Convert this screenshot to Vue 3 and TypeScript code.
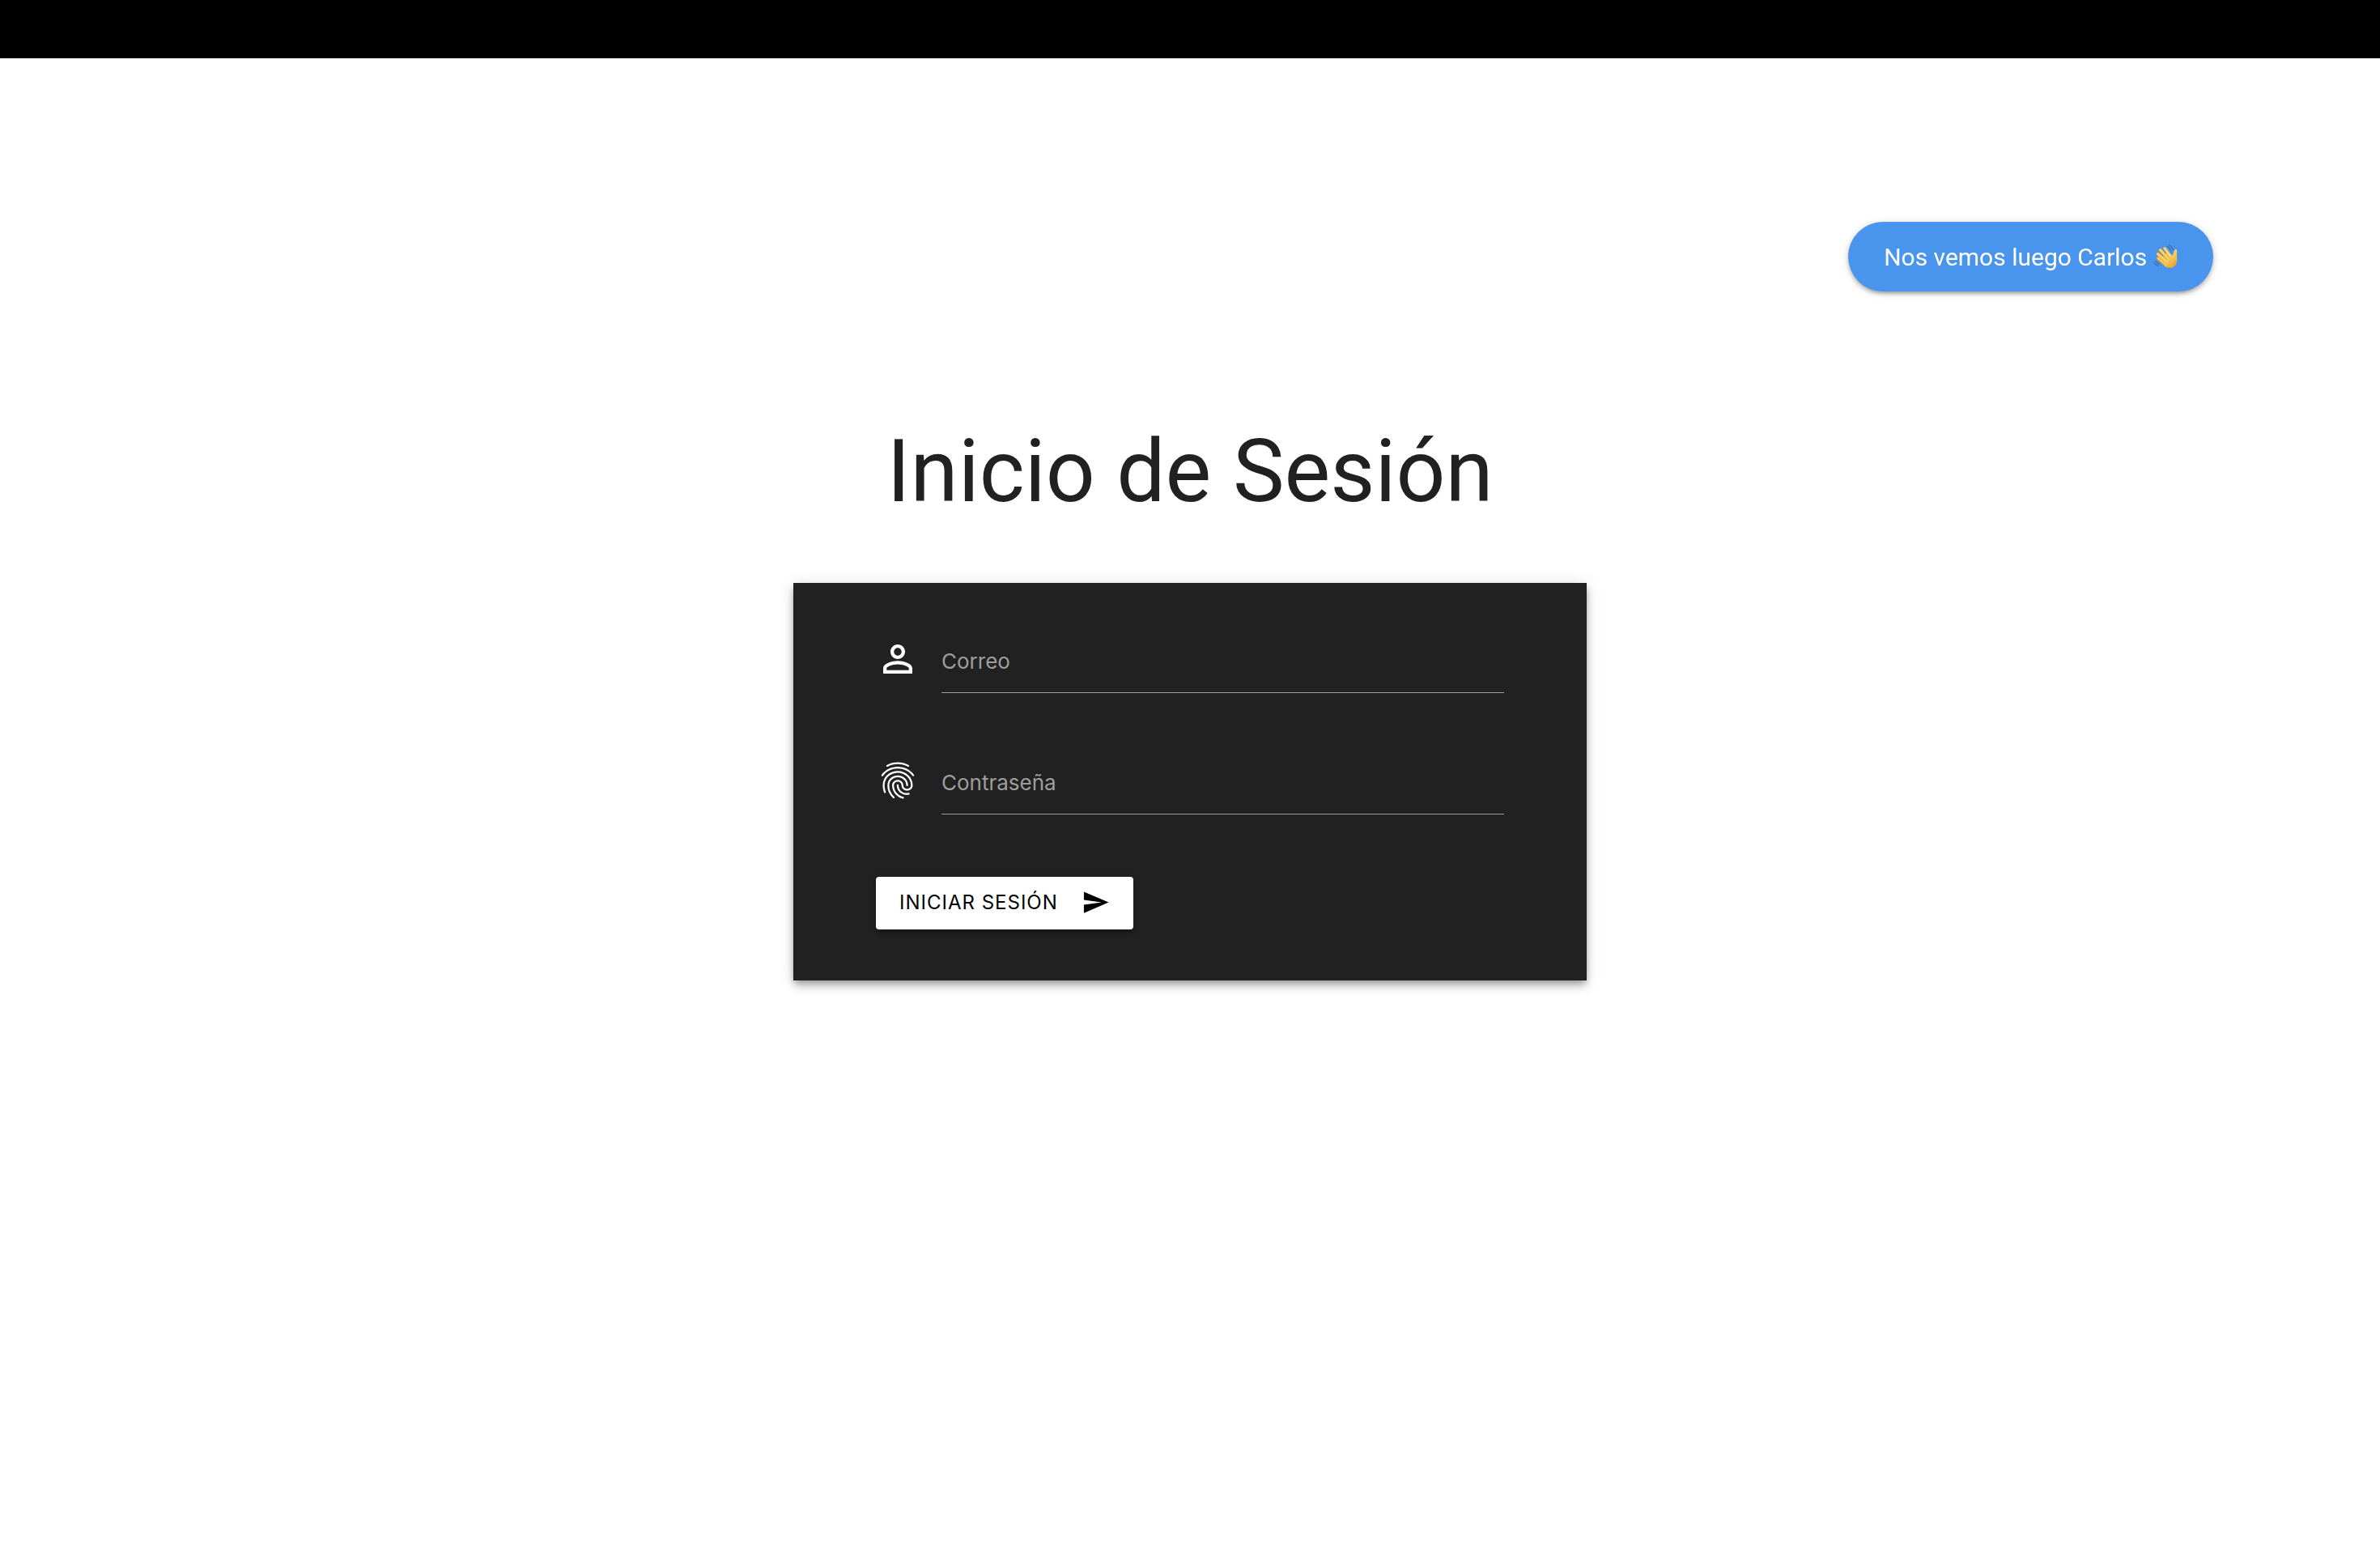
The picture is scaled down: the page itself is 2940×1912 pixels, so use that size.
<script setup lang="ts">
import { ref } from 'vue'

const email = ref('')
const password = ref('')
</script>

<template>
  <div class="page">
    <header class="navbar"></header>

    <main class="content">
      <h1 class="title">Inicio de Sesión</h1>

      <form class="card" @submit.prevent>
        <div class="field">
          <svg class="field-icon" viewBox="0 0 24 24" aria-hidden="true">
            <path d="M12 5.9c1.16 0 2.1.94 2.1 2.1s-.94 2.1-2.1 2.1S9.9 9.16 9.9 8s.94-2.1 2.1-2.1m0 9c2.97 0 6.1 1.46 6.1 2.1v1.1H5.9V17c0-.64 3.13-2.1 6.1-2.1M12 4C9.79 4 8 5.79 8 8s1.79 4 4 4 4-1.79 4-4-1.79-4-4-4zm0 9c-2.67 0-8 1.34-8 4v3h16v-3c0-2.66-5.33-4-8-4z" />
          </svg>
          <div class="control">
            <label for="email" :class="{ hidden: email }">Correo</label>
            <input id="email" v-model="email" type="email" />
          </div>
        </div>

        <div class="field">
          <svg class="field-icon" viewBox="0 0 24 24" aria-hidden="true">
            <path d="M17.81 4.47c-.08 0-.16-.02-.23-.06C15.66 3.42 14 3 12.01 3c-1.98 0-3.86.47-5.57 1.41-.24.13-.54.04-.68-.2-.13-.24-.04-.55.2-.68C7.82 2.52 9.86 2 12.01 2c2.13 0 3.99.47 6.03 1.52.25.13.34.43.21.67-.09.18-.26.28-.44.28zM3.5 9.72c-.1 0-.2-.03-.29-.09-.23-.16-.28-.47-.12-.7.99-1.4 2.25-2.5 3.75-3.27C9.98 4.04 14 4.03 17.15 5.65c1.5.77 2.76 1.86 3.75 3.25.16.22.11.54-.12.7-.23.16-.54.11-.7-.12-.9-1.26-2.04-2.25-3.39-2.94-2.87-1.47-6.54-1.47-9.4.01-1.36.7-2.5 1.7-3.4 2.96-.08.14-.23.21-.39.21zm6.25 12.07c-.13 0-.26-.05-.35-.15-.87-.87-1.34-1.43-2.01-2.64-.69-1.23-1.05-2.73-1.05-4.34 0-2.97 2.54-5.39 5.66-5.39s5.66 2.42 5.66 5.39c0 .28-.22.5-.5.5s-.5-.22-.5-.5c0-2.42-2.09-4.39-4.66-4.39-2.57 0-4.66 1.97-4.66 4.39 0 1.44.32 2.77.93 3.85.64 1.15 1.08 1.64 1.85 2.42.19.2.19.51 0 .71-.11.1-.24.15-.37.15zm7.17-1.85c-1.19 0-2.24-.3-3.1-.89-1.49-1.01-2.38-2.65-2.38-4.39 0-.28.22-.5.5-.5s.5.22.5.5c0 1.41.72 2.74 1.94 3.56.71.48 1.54.71 2.54.71.24 0 .64-.03 1.04-.1.27-.05.53.13.58.41.05.27-.13.53-.41.58-.57.11-1.07.12-1.21.12zM14.91 22c-.04 0-.09-.01-.13-.02-1.59-.44-2.63-1.03-3.72-2.1-1.4-1.39-2.17-3.24-2.17-5.22 0-1.62 1.38-2.94 3.08-2.94 1.7 0 3.08 1.32 3.08 2.94 0 1.07.93 1.94 2.08 1.94s2.08-.87 2.08-1.94c0-3.77-3.25-6.83-7.25-6.83-2.84 0-5.44 1.58-6.61 4.03-.39.81-.59 1.76-.59 2.8 0 .78.07 2.01.67 3.61.1.26-.03.55-.29.64-.26.1-.55-.04-.64-.29-.49-1.31-.73-2.61-.73-3.96 0-1.2.23-2.29.68-3.24 1.33-2.79 4.28-4.6 7.51-4.6 4.55 0 8.25 3.51 8.25 7.83 0 1.62-1.38 2.94-3.08 2.94s-3.08-1.32-3.08-2.94c0-1.07-.93-1.94-2.08-1.94s-2.08.87-2.08 1.94c0 1.71.66 3.31 1.87 4.51.95.94 1.86 1.46 3.27 1.85.27.07.42.35.35.61-.05.23-.26.38-.47.38z" />
          </svg>
          <div class="control">
            <label for="password" :class="{ hidden: password }">Contraseña</label>
            <input id="password" v-model="password" type="password" />
          </div>
        </div>

        <button class="submit" type="submit">
          Iniciar Sesión
          <svg class="submit-icon" viewBox="0 0 24 24" aria-hidden="true">
            <path d="M2.01 21L23 12 2.01 3 2 10l15 2-15 2z" />
          </svg>
        </button>
      </form>
    </main>

    <div class="toast" role="status">
      <span>Nos vemos luego Carlos</span>
      <svg class="wave" viewBox="0 0 90 90" role="img" aria-label="Saludo">
        <defs>
          <linearGradient id="palm" x1="0" y1="0" x2="0.7" y2="1">
            <stop offset="0" stop-color="#fbd36a" />
            <stop offset="0.6" stop-color="#f8cb58" />
            <stop offset="1" stop-color="#e5a136" />
          </linearGradient>
        </defs>
        <g fill="none" stroke="#3f5878" stroke-width="3" stroke-linecap="round">
          <path d="M53 7Q62 12 65 22" />
          <path d="M58 1Q69 7 74 19" />
          <path d="M9 61Q13 70 22 73" />
          <path d="M2 66Q7 77 18 80" />
        </g>
        <path
          d="M42 32L62 34C67 41 72 42 74 34L78 22C80 15 89 18 88 25C86 34 88 43 88 54C88 74 78 87 62 87C50 87 43 82 34 73L28 62Z"
          fill="url(#palm)"
        />
        <g fill="none" stroke-linecap="round">
          <g stroke="#c48528" stroke-width="13">
            <path d="M18 51L40 70" />
            <path d="M17 35L46 61" />
            <path d="M26 20L54 52" />
          </g>
          <path d="M42 14L63 43" stroke="#fbd36a" stroke-width="10" />
          <path d="M26 20L56 54" stroke="#fbd36a" stroke-width="10" />
          <path d="M17 35L50 64" stroke="#fbd36a" stroke-width="10" />
          <path d="M18 51L46 74" stroke="#f6c653" stroke-width="10" />
        </g>
        <path d="M68 48Q58 56 62 68" fill="none" stroke="#e9b548" stroke-width="2" />
      </svg>
    </div>
  </div>
</template>

<style>
body {
  margin: 0;
  background: #fff;
}
</style>

<style scoped>
.page {
  min-height: 100vh;
  font-family: Inter, 'Liberation Sans', sans-serif;
  color: #212121;
}

.navbar {
  height: 72px;
  background: #000;
}

.content {
  display: flex;
  flex-direction: column;
  align-items: center;
  padding-top: 444px;
}

.title {
  margin: 0 0 70px;
  font-family: Roboto, 'Liberation Sans', sans-serif;
  font-size: 107px;
  line-height: 134px;
  font-weight: 400;
  white-space: nowrap;
}

.card {
  box-sizing: border-box;
  width: calc(100% / 3);
  min-width: 600px;
  padding: 50px 102px 63px;
  background: #212121;
  box-shadow:
    0 8px 10px 0 rgba(0, 0, 0, 0.14),
    0 2px 20px 0 rgba(0, 0, 0, 0.12),
    0 4px 8px -2px rgba(0, 0, 0, 0.3);
}

.field {
  display: flex;
  align-items: center;
  gap: 27px;
  box-sizing: border-box;
  height: 86px;
  padding-top: 2px;
}

.field + .field {
  margin-top: 64px;
}

.field-icon {
  flex: none;
  width: 54px;
  height: 54px;
  fill: #fff;
}

.control {
  display: grid;
  flex: 1;
  height: 100%;
}

.control label,
.control input {
  grid-area: 1 / 1;
}

.control label {
  align-self: center;
  padding-top: 6px;
  font-size: 26px;
  line-height: 32px;
  color: #9e9e9e;
  pointer-events: none;
}

.control label.hidden {
  visibility: hidden;
}

.control input {
  box-sizing: border-box;
  width: 100%;
  min-width: 0;
  height: 100%;
  padding: 0;
  border: 0;
  border-bottom: 1px solid #9e9e9e;
  border-radius: 0;
  outline: none;
  background: transparent;
  color: #fff;
  font: inherit;
  font-size: 26px;
}

.submit {
  display: flex;
  align-items: center;
  gap: 29px;
  height: 65px;
  margin-top: 77px;
  padding: 0 29px 2px;
  border: 0;
  border-radius: 4px;
  background: #fff;
  color: #000;
  font-family: inherit;
  font-size: 24px;
  letter-spacing: 1px;
  text-transform: uppercase;
  white-space: nowrap;
  cursor: pointer;
  box-shadow:
    0 4px 4px 0 rgba(0, 0, 0, 0.14),
    0 6px 2px -4px rgba(0, 0, 0, 0.12),
    0 2px 10px 0 rgba(0, 0, 0, 0.2);
}

.submit-icon {
  width: 35px;
  height: 35px;
  fill: #000;
}

.toast {
  position: fixed;
  top: 274px;
  right: 7%;
  display: flex;
  align-items: center;
  gap: 8px;
  box-sizing: border-box;
  height: 86px;
  padding: 0 44px;
  border-radius: 48px;
  background: #4994ec;
  color: #fff;
  font-family: Roboto, 'Liberation Sans', sans-serif;
  font-size: 30px;
  white-space: nowrap;
  box-shadow:
    0 4px 4px 0 rgba(0, 0, 0, 0.14),
    0 6px 2px -4px rgba(0, 0, 0, 0.12),
    0 2px 10px 0 rgba(0, 0, 0, 0.2);
}

.wave {
  width: 30px;
  height: 30px;
}
</style>
